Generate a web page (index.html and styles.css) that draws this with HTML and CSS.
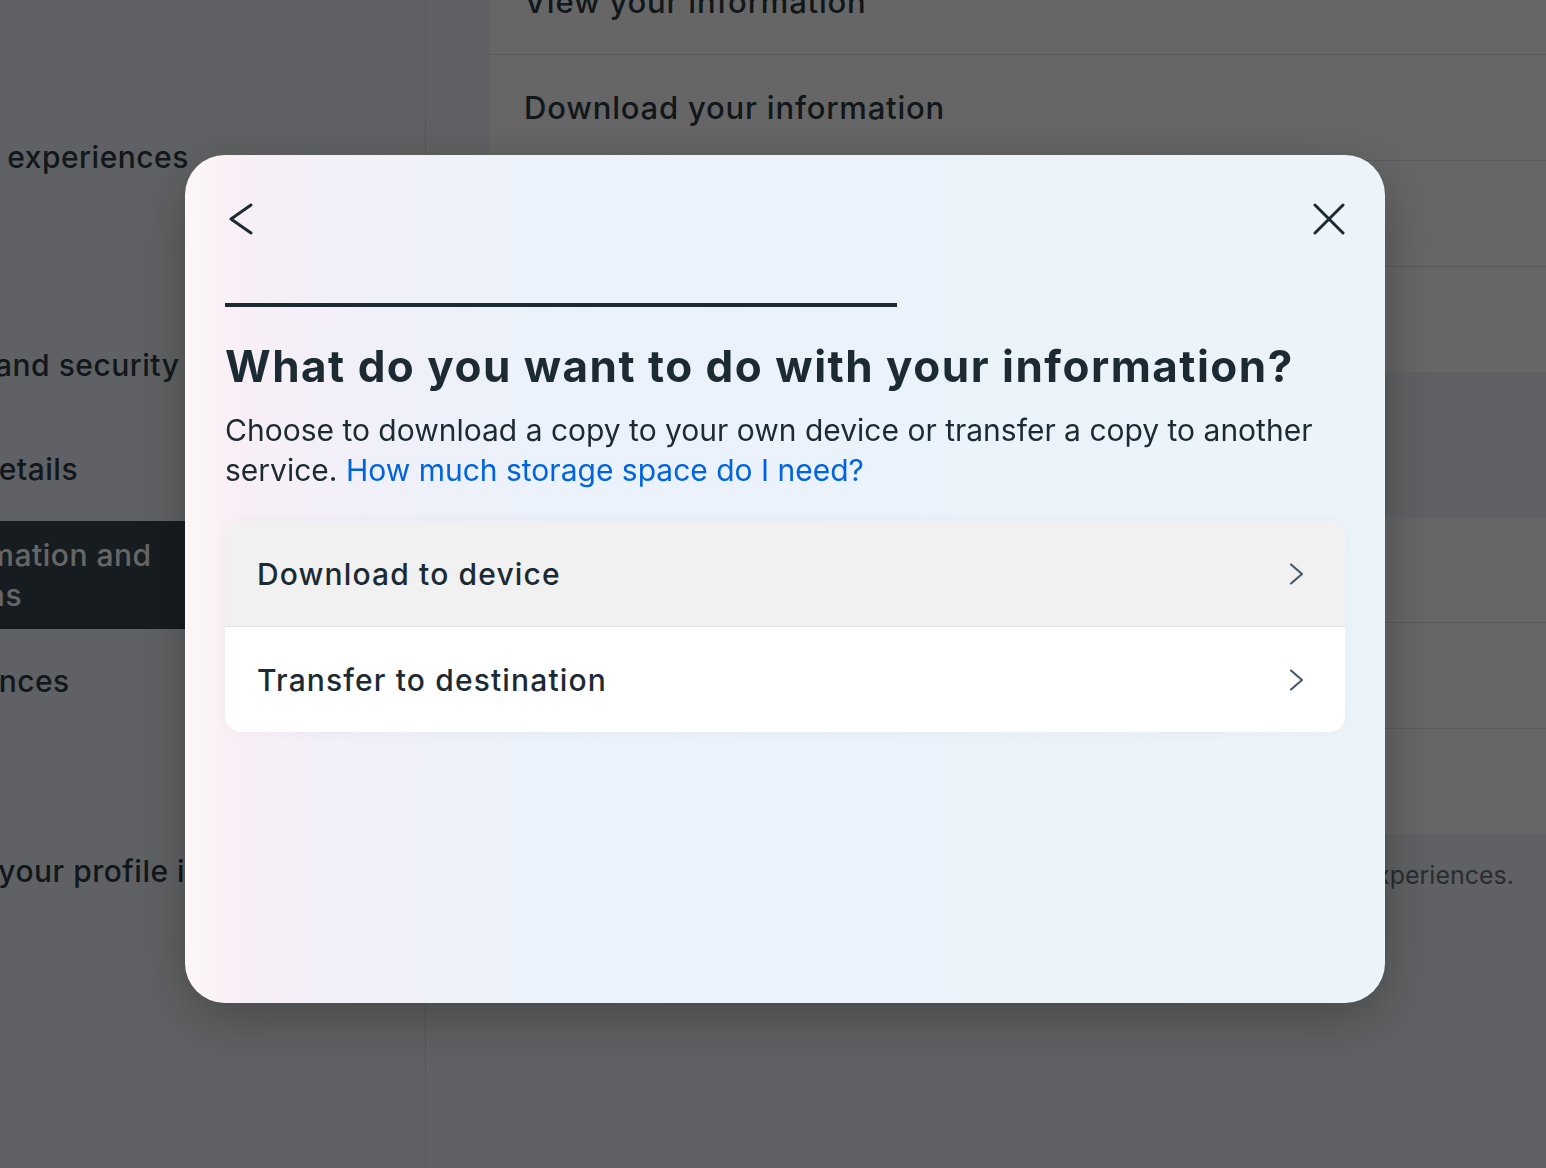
FILE: index.html
```html
<!DOCTYPE html>
<html lang="en">
<head>
<meta charset="utf-8">
<title>Accounts Center - Download your information</title>
<link rel="stylesheet" href="styles.css">
</head>
<body>
<div class="page">
  <aside class="sidebar">
    <nav class="nav">
      <div class="nav-item nav-item-tight">Connected experiences</div>
      <div class="nav-heading">Account settings</div>
      <div class="nav-item">Password and security</div>
      <div class="nav-item">Personal details</div>
      <div class="nav-item active">Your information and permissions</div>
      <div class="nav-item">Ad preferences</div>
    </nav>
    <div class="sidebar-footer">Manage your profile information</div>
  </aside>
  <main class="main">
    <header class="main-header">
      <h2 class="main-title">Your information and permissions</h2>
    </header>
    <section class="card">
      <div class="card-row">View your information</div>
      <div class="card-row">Download your information</div>
      <div class="card-row">Transfer a copy of your information</div>
      <div class="card-row">Search history</div>
    </section>
    <div class="section-head">Your activity</div>
    <section class="card">
      <div class="card-row">Activity log</div>
      <div class="card-row">Apps and websites</div>
      <div class="card-row">Recently deleted</div>
    </section>
    <p class="note">Your information helps us personalise your experiences.</p>
  </main>
</div>

<div class="modal-layer">
  <div class="modal" role="dialog" aria-modal="true">
    <div class="modal-header">
      <button class="icon-btn" aria-label="Back">
        <svg width="32" height="32" viewBox="0 0 32 32" fill="none" stroke="#1c2b33" stroke-width="3" stroke-linecap="round" stroke-linejoin="round"><polyline points="26,2 6,16 26,30"/></svg>
      </button>
      <button class="icon-btn" aria-label="Close">
        <svg width="32" height="32" viewBox="0 0 32 32" fill="none" stroke="#1c2b33" stroke-width="3" stroke-linecap="round"><line x1="2" y1="2" x2="30" y2="30"/><line x1="30" y1="2" x2="2" y2="30"/></svg>
      </button>
    </div>
    <div class="progress"><div class="progress-fill" style="width:60%"></div></div>
    <h1 class="modal-title">What do you want to do with your information?</h1>
    <p class="modal-desc">Choose to download a copy to your own device or transfer a copy to another service. <a class="link" href="#">How much storage space do I need?</a></p>
    <div class="options">
      <button class="option option-hover">
        <span>Download to device</span>
        <svg class="chev" width="24" height="24" viewBox="0 0 24 24" fill="none" stroke="#465a69" stroke-width="2.2" stroke-linecap="round" stroke-linejoin="round"><polyline points="7,2.5 18,12 7,21.5"/></svg>
      </button>
      <button class="option">
        <span>Transfer to destination</span>
        <svg class="chev" width="24" height="24" viewBox="0 0 24 24" fill="none" stroke="#465a69" stroke-width="2.2" stroke-linecap="round" stroke-linejoin="round"><polyline points="7,2.5 18,12 7,21.5"/></svg>
      </button>
    </div>
  </div>
</div>
</body>
</html>
```

FILE: styles.css
```css
* { box-sizing: border-box; }

html, body {
  margin: 0;
  height: 100%;
  overflow: hidden;
}

body {
  font-family: Inter, "Noto Sans", sans-serif;
  background: #eef3f9;
  color: #2d3b44;
}

/* ---------- background page ---------- */
.page {
  display: flex;
  width: 1786px;
  min-height: 1400px;
  margin-top: -200px;
  margin-left: -180px;
}

.sidebar {
  flex: none;
  width: 606px;
  padding-top: 305px;
  border-right: 1px solid #d3d9e0;
}

.nav { width: 400px; }

.nav-item {
  display: flex;
  align-items: center;
  min-height: 104px;
  padding: 14px 22px;
  font-size: 30px;
  font-weight: 500;
  line-height: 40px;
  letter-spacing: 0.5px;
}

.nav-item-tight { padding-left: 17px; }

.nav-item.active {
  background: #3a4651;
  color: #ffffff;
}

.nav-heading {
  display: flex;
  align-items: center;
  min-height: 104px;
  padding: 14px 22px;
  font-size: 16px;
  font-weight: 700;
}

.sidebar-footer {
  margin-top: 118px;
  padding-left: 51px;
  font-size: 30px;
  font-weight: 500;
  line-height: 40px;
  letter-spacing: 0.5px;
  white-space: nowrap;
}

.main {
  flex: 1;
  padding-left: 64px;
}

.main-header {
  height: 149px;
  overflow: hidden;
}

.main-title {
  margin: 40px 0 0 32px;
  font-size: 36px;
}

.card {
  background: #ffffff;
  border-radius: 12px;
  overflow: hidden;
}

.card-row {
  box-sizing: content-box;
  height: 105px;
  display: flex;
  align-items: center;
  padding: 0 34px;
  font-size: 31px;
  font-weight: 500;
  letter-spacing: 0.8px;
}

.card-row + .card-row { border-top: 1px solid #dce1e7; }

.section-head {
  height: 145px;
  display: flex;
  align-items: center;
  padding-left: 32px;
  font-size: 26px;
  font-weight: 700;
}

.note {
  margin: 24px 0 0;
  padding-right: 92px;
  text-align: right;
  font-size: 25px;
  line-height: 34px;
  color: #6a7178;
}

/* ---------- modal ---------- */
.modal-layer {
  position: fixed;
  inset: 0;
  background: rgba(0, 0, 0, 0.6);
  display: flex;
  align-items: flex-start;
  padding: 155px 0 0 185px;
}

.modal {
  width: 1200px;
  height: 848px;
  border-radius: 40px;
  padding: 48px 40px;
  display: flex;
  flex-direction: column;
  color: #1c2b33;
  background: linear-gradient(90deg, #fdf7f6 0%, #f9eff6 4%, #f2f0f9 13%, #ecf1fa 26%, #eaf2fb 60%, #edf4f9 100%);
  box-shadow: 0 16px 56px rgba(0, 0, 0, 0.28);
}

.modal-header {
  display: flex;
  justify-content: space-between;
  height: 32px;
}

.icon-btn {
  width: 32px;
  height: 32px;
  padding: 0;
  border: 0;
  background: transparent;
  display: block;
}

.icon-btn svg { display: block; }

.progress {
  margin-top: 68px;
  height: 4px;
}

.progress-fill {
  height: 100%;
  background: #1c2b33;
}

.modal-title {
  margin: 33px 0 0;
  font-size: 44px;
  line-height: 52px;
  font-weight: 700;
  letter-spacing: 1.5px;
}

.modal-desc {
  margin: 18px 0 0;
  font-size: 30px;
  line-height: 40px;
}

.link {
  color: #0064e0;
  text-decoration: none;
}

.options {
  margin-top: 31px;
  background: #ffffff;
  border-radius: 16px;
  overflow: hidden;
  box-shadow: 0 0 16px rgba(0, 0, 0, 0.04);
}

.option {
  width: 100%;
  height: 105px;
  padding: 0 37px 0 32px;
  border: 0;
  background: #ffffff;
  display: flex;
  align-items: center;
  justify-content: space-between;
  font-family: inherit;
  font-size: 30px;
  font-weight: 500;
  letter-spacing: 1.15px;
  color: #1c2b33;
  text-align: left;
}

.option-hover {
  height: 106px;
  background: #f1f1f1;
  border-bottom: 1px solid #dfe3e8;
}

.chev {
  display: block;
  flex: none;
}
```
